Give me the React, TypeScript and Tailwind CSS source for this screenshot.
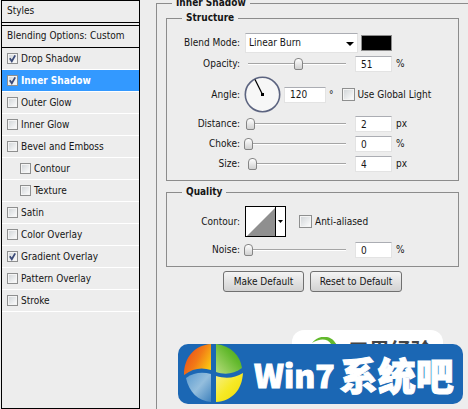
import React, { useId, useState } from "react";

type TickProps = { label: string; on?: boolean; bold?: boolean; large?: boolean };

function Tick({ label, on = false, bold = false, large = false }: TickProps) {
  const [checked, setChecked] = useState(on);
  const size = large ? "size-[13px]" : "size-[11px]";
  return (
    <label className={`flex items-center gap-[3px] whitespace-nowrap ${bold ? "font-bold text-white" : ""}`}>
      <span className={`relative block shrink-0 ${size}`}>
        <input
          type="checkbox"
          checked={checked}
          onChange={(e) => setChecked(e.target.checked)}
          className={`block appearance-none border border-[#8e8f8f] bg-linear-to-br from-[#cfd3d6] to-white shadow-[inset_0_0_0_1px_#f4f4f4] ${size}`}
        />
        {checked && (
          <svg viewBox="0 0 11 11" className="pointer-events-none absolute inset-0">
            <path d="M2.8 5.2 L4.8 8.2 L8.2 2.4" fill="none" stroke="#3b4a78" strokeWidth="1.8" />
          </svg>
        )}
      </span>
      {label}
    </label>
  );
}

const effects = [
  { name: "Drop Shadow", on: true },
  { name: "Inner Shadow", on: true, active: true },
  { name: "Outer Glow" },
  { name: "Inner Glow" },
  { name: "Bevel and Emboss" },
  { name: "Contour", sub: true },
  { name: "Texture", sub: true },
  { name: "Satin" },
  { name: "Color Overlay" },
  { name: "Gradient Overlay", on: true },
  { name: "Pattern Overlay" },
  { name: "Stroke" },
];

function NumberBox({ id, value, wide = false }: { id: string; value: string; wide?: boolean }) {
  return (
    <input
      id={id}
      type="text"
      defaultValue={value}
      className={`h-4 border border-[#e3e3e3] border-t-[#abadb3] bg-white pl-[5px] ${wide ? "w-[42px]" : "w-[37px]"}`}
    />
  );
}

function SliderRow({ label, value, unit, position }: { label: string; value: string; unit: string; position: number }) {
  const id = useId();
  return (
    <div className="flex h-5 items-center">
      <label htmlFor={id} className="w-[73px] shrink-0 text-right">{label}</label>
      <input
        type="range"
        aria-label={`${label} slider`}
        defaultValue={position}
        className="ml-1 mr-2 h-4 w-[103px] appearance-none bg-transparent bg-[linear-gradient(#a5a5a5,#a5a5a5),linear-gradient(#fff,#fff)] bg-[length:98px_1px] bg-[position:4px_7px,4px_8px] bg-no-repeat [&::-webkit-slider-thumb]:h-3 [&::-webkit-slider-thumb]:w-[9px] [&::-webkit-slider-thumb]:appearance-none [&::-webkit-slider-thumb]:rounded-t-[4px] [&::-webkit-slider-thumb]:rounded-b-[2px] [&::-webkit-slider-thumb]:border [&::-webkit-slider-thumb]:border-[#858585] [&::-webkit-slider-thumb]:bg-linear-to-b [&::-webkit-slider-thumb]:from-white [&::-webkit-slider-thumb]:to-[#d0d0d0]"
      />
      <NumberBox id={id} value={value} />
      <span className="ml-1">{unit}</span>
    </div>
  );
}

function Group({ title, className, children }: { title: string; className: string; children: React.ReactNode }) {
  return (
    <fieldset className={`min-w-0 border border-[#8c8c8c] ${className}`}>
      <legend className="ml-[15px] px-1 font-bold leading-[14px]">{title}</legend>
      {children}
    </fieldset>
  );
}

function Orb() {
  return (
    <svg viewBox="0 0 60 60" className="size-[60px] shrink-0" aria-hidden="true">
      <defs>
        <linearGradient id="red" x1="0" y1="0.2" x2="1" y2="0.8">
          <stop offset="0" stopColor="#e8481c" />
          <stop offset="0.5" stopColor="#f27a16" />
          <stop offset="1" stopColor="#fbd012" />
        </linearGradient>
        <linearGradient id="green" x1="0" y1="1" x2="1" y2="0">
          <stop offset="0" stopColor="#b7dc7c" />
          <stop offset="0.6" stopColor="#63b92d" />
          <stop offset="1" stopColor="#3f9c1c" />
        </linearGradient>
        <linearGradient id="blue" x1="0" y1="0" x2="1" y2="1">
          <stop offset="0" stopColor="#5b9bd0" />
          <stop offset="0.5" stopColor="#94bedd" />
          <stop offset="1" stopColor="#3f82bd" />
        </linearGradient>
        <linearGradient id="yellow" x1="0" y1="0" x2="1" y2="1">
          <stop offset="0" stopColor="#f7f08a" />
          <stop offset="0.5" stopColor="#f6e924" />
          <stop offset="1" stopColor="#efd90c" />
        </linearGradient>
      </defs>
      <path d="M27 0 V26 C18 23 9 24 0 31 C0 13 11 1 27 0Z" fill="url(#red)" />
      <path d="M32 0 C47 2 56 11 58 24 C50 30 41 31 32 28Z" fill="url(#green)" />
      <path d="M2 34 C10 28 19 28 27 30 V58 C14 57 5 48 2 34Z" fill="url(#blue)" />
      <path d="M32 32 C42 35 51 34 59 29 C58 46 48 57 32 58Z" fill="url(#yellow)" />
    </svg>
  );
}

export default function App() {
  return (
    <main className="relative flex min-h-screen overflow-hidden bg-[#ededed] pl-px font-['DejaVu_Sans_Condensed','DejaVu_Sans',sans-serif] text-[10px] leading-[14px] text-[#151515]">
      <nav className="w-[139px] shrink-0 border border-black">
        <h2 className="h-[21px] pl-[5px] pt-[3px]">Styles</h2>
        <div className="h-1 border-y border-black" />
        <h2 className="h-[22px] border-b border-black pl-[5px] pt-[3px]">Blending Options: Custom</h2>
        <ul>
          {effects.map((e) => (
            <li
              key={e.name}
              className={`flex h-[22px] items-center border-b border-white ${e.sub ? "pl-[18px]" : "pl-[5px]"} ${e.active ? "bg-[#3399ff]" : ""}`}
            >
              <Tick label={e.name} on={e.on} bold={e.active} />
            </li>
          ))}
        </ul>
      </nav>

      <Group title="Inner Shadow" className="-mt-1 ml-4 flex-1 border-r-0 border-b-0">
        <div className="pl-[9px] pr-[9px] pt-px">
          <Group title="Structure" className="pb-[6px] pt-2">
            <div className="flex items-center">
              <label htmlFor="mode" className="w-[73px] shrink-0 text-right">Blend Mode:</label>
              <div className="relative ml-[5px]">
                <select id="mode" className="block h-5 w-[113px] appearance-none border border-[#e3e3e3] border-t-[#abadb3] bg-white pl-[3px]">
                  <option>Linear Burn</option>
                </select>
                <svg viewBox="0 0 8 4" className="pointer-events-none absolute right-1 top-[9px] h-1 w-2">
                  <path d="M0 0H8L4 4Z" />
                </svg>
              </div>
              <button type="button" aria-label="Shadow color" className="ml-[3px] h-4 w-[31px] border border-[#8c8c8c] bg-black" />
            </div>
            <div className="mt-px">
              <SliderRow label="Opacity:" value="51" unit="%" position={53} />
            </div>
            <div className="mt-[2px] flex items-center">
              <label htmlFor="angle" className="w-[73px] shrink-0 text-right">Angle:</label>
              <svg viewBox="0 0 37 37" className="ml-1 size-[37px] shrink-0">
                <circle cx="18.5" cy="18.5" r="17.2" fill="#f7f7f7" stroke="#5c6480" strokeWidth="1.6" />
                <path d="M18.5 18.5L11 3.5" stroke="#000" strokeWidth="1.2" />
                <rect x="17" y="17" width="3" height="3" />
              </svg>
              <span className="ml-[3px] flex"><NumberBox id="angle" value="120" wide /></span>
              <span className="ml-[3px] mr-2">°</span>
              <Tick label="Use Global Light" large />
            </div>
            <div className="mt-px">
              <SliderRow label="Distance:" value="2" unit="px" position={2} />
              <SliderRow label="Choke:" value="0" unit="%" position={0} />
              <SliderRow label="Size:" value="4" unit="px" position={4} />
            </div>
          </Group>
          <Group title="Quality" className="mt-1 pb-[6px] pt-[7px]">
            <div className="mb-[3px] flex items-center">
              <span className="w-[73px] shrink-0 text-right">Contour:</span>
              <button type="button" aria-label="Contour" className="ml-[5px] mr-[13px]">
                <svg viewBox="0 0 41 31" className="block h-[31px] w-[41px]">
                  <rect x="0.5" y="0.5" width="40" height="30" fill="#fff" stroke="#000" />
                  <path d="M2 30L30 2V30Z" fill="#8f8f8f" />
                  <path d="M30.5 0V31" stroke="#000" />
                  <path d="M33 14H38L35.5 17Z" />
                </svg>
              </button>
              <Tick label="Anti-aliased" large />
            </div>
            <SliderRow label="Noise:" value="0" unit="%" position={0} />
          </Group>
          <div className="mt-1 flex gap-[6px] pl-[57px]">
            <button type="button" className="h-[21px] w-[81px] whitespace-nowrap rounded-[3px] border border-[#707070] bg-linear-to-b from-[#f4f4f4] to-[#d2d2d2]">Make Default</button>
            <button type="button" className="h-[21px] w-[92px] whitespace-nowrap rounded-[3px] border border-[#707070] bg-linear-to-b from-[#f4f4f4] to-[#d2d2d2]">Reset to Default</button>
          </div>
        </div>
      </Group>

      <div className="absolute bottom-[5px] right-[5px] flex flex-col items-end font-['Noto_Sans_CJK_SC',sans-serif]">
        <div className="mr-5 flex h-[14px] w-[151px] gap-2 overflow-hidden rounded-t-xl bg-white pl-5 pt-[7px]">
          <svg viewBox="0 0 28 24" className="h-6 w-7 shrink-0">
            <path d="M0 6C6 -2 17 -2 22 4L25 8L20 9C17 1 8 1 0 6Z" fill="#63b92d" />
          </svg>
          <span className="whitespace-nowrap text-[21px] font-bold leading-[24px] text-[#444]">三界经验</span>
        </div>
        <div className="flex h-[60px] w-[285px] items-center rounded-[10px] bg-[#1b67b4] pl-[6px] text-white">
          <Orb />
          <div className="ml-[10px] flex items-center gap-[5px] whitespace-nowrap font-black [-webkit-text-stroke:1px_white]">
            <span className="text-[32px] leading-[60px]">Win7</span>
            <span className="text-[38px] leading-[60px]">系统吧</span>
          </div>
        </div>
      </div>
    </main>
  );
}
